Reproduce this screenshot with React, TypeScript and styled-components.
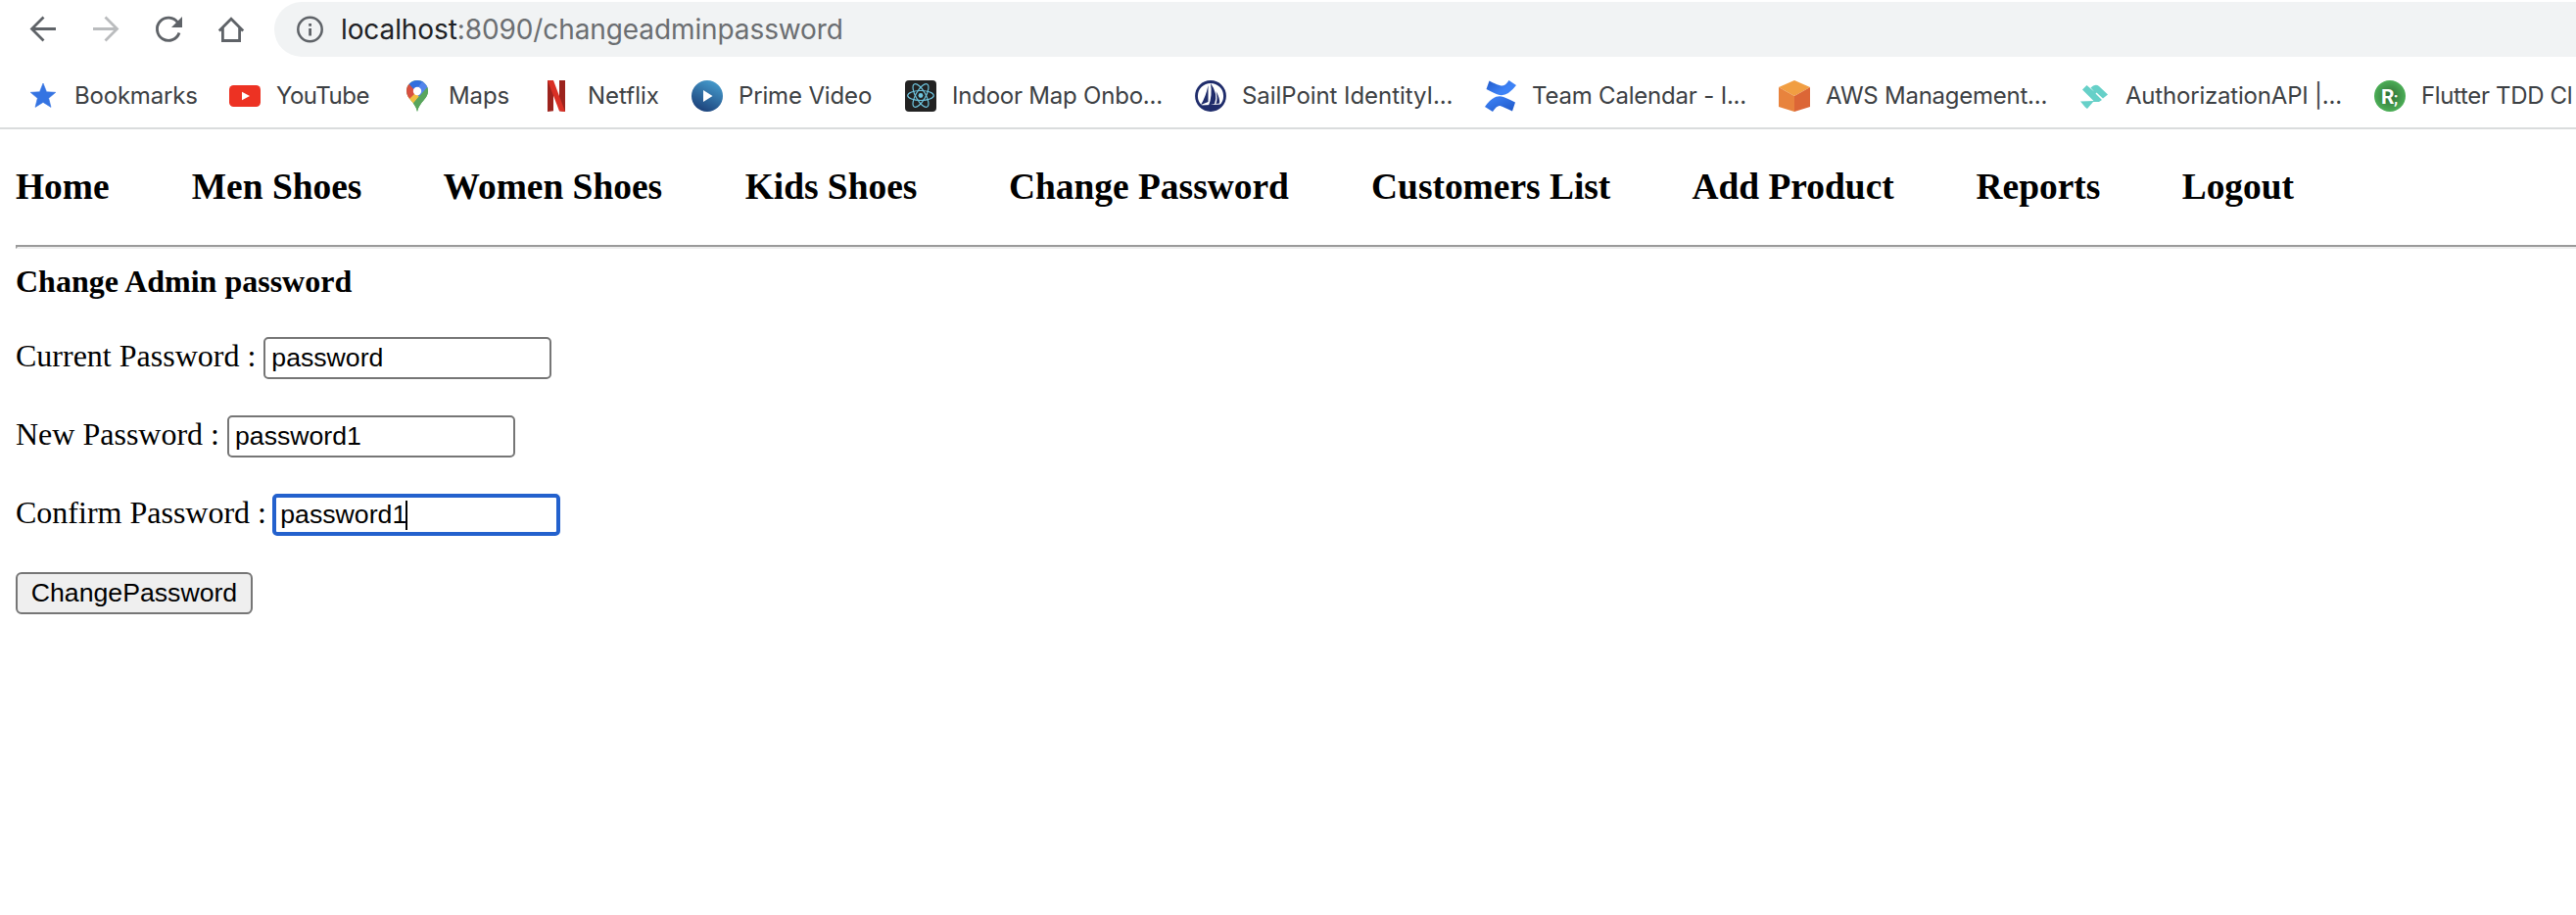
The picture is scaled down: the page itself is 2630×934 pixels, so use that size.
import React from "react";
import styled, { createGlobalStyle } from "styled-components";

const GlobalStyle = createGlobalStyle`
  html, body { margin: 0; background: #fff; overflow: hidden; }
  * { box-sizing: border-box; }
`;

const Window = styled.div`
  width: 100%;
  height: 934px;
  overflow: hidden;
  background: #fff;
`;

const Toolbar = styled.div`
  display: flex;
  align-items: center;
  height: 60px;
  padding-left: 24px;
`;

const ToolButton = styled.span<{ $dim?: boolean }>`
  flex: none;
  display: flex;
  align-items: center;
  justify-content: center;
  width: 40px;
  height: 40px;
  margin-right: 24px;
  color: ${(p) => (p.$dim ? "#babcbe" : "#5f6368")};
`;

const AddressBar = styled.div`
  flex: 1;
  display: flex;
  align-items: center;
  height: 56px;
  padding-left: 22px;
  border-radius: 28px 0 0 28px;
  background: #f1f3f4;
  color: #5f6368;
`;

const Url = styled.span`
  margin-left: 16px;
  font: 400 28px/56px Inter, sans-serif;
  letter-spacing: -0.1px;
  color: #6b6e71;
  white-space: nowrap;
`;

const Host = styled.span`
  color: #202124;
`;

const BookmarkBar = styled.div`
  display: flex;
  align-items: center;
  height: 72px;
  padding: 6px 0 0 28px;
  border-bottom: 2px solid #dadcdd;
`;

const Bookmark = styled.div<{ $width: number }>`
  flex: none;
  display: flex;
  align-items: center;
  gap: 16px;
  width: ${(p) => p.$width}px;
  height: 32px;
`;

const BookmarkLabel = styled.span<{ $spacing: number }>`
  font: 400 24px/32px Inter, sans-serif;
  letter-spacing: ${(p) => p.$spacing}px;
  color: #3c4043;
  white-space: nowrap;
`;

const Icon = styled.svg`
  flex: none;
  display: block;
`;

const Page = styled.main`
  padding: 0 0 0 16px;
  font-family: "Liberation Serif", serif;
  color: #000;
`;

const Nav = styled.nav`
  display: flex;
  padding-top: 37px;
  font-size: 37.44px;
  font-weight: 700;
  line-height: 43px;
  white-space: nowrap;
`;

const NavLink = styled.span<{ $gap: number }>`
  margin-right: ${(p) => p.$gap}px;
`;

const Rule = styled.div`
  height: 4px;
  margin-top: 38px;
  border: 2px solid;
  border-right: 0;
  border-color: #9a9a9a #eee #eee #9a9a9a;
`;

const Title = styled.h1`
  margin: 14px 0 0;
  padding-bottom: 1px;
  font-size: 32px;
  line-height: 38px;
  font-weight: 700;
`;

const Row = styled.div<{ $gap?: number }>`
  display: flex;
  align-items: center;
  gap: ${(p) => p.$gap ?? 8}px;
  height: 43px;
  margin-top: 37px;
  font-size: 32px;
  line-height: 37px;
`;

const Label = styled.label`
  padding-bottom: 5px;
  white-space: nowrap;
`;

const Field = styled.div<{ $focused?: boolean }>`
  display: flex;
  align-items: center;
  width: 294px;
  height: 43px;
  padding-left: ${(p) => (p.$focused ? 4 : 6)}px;
  border: ${(p) => (p.$focused ? "4px solid #2361cd" : "2px solid #767676")};
  border-radius: 5px;
  background: #fff;
  font: 26.67px/31px "Liberation Sans", Arial, sans-serif;
`;

const Caret = styled.span`
  width: 2px;
  height: 30px;
  margin-left: -1px;
  background: #000;
`;

const Submit = styled.button`
  width: 242px;
  height: 43px;
  padding: 0 0 1px;
  border: 2px solid #767676;
  border-radius: 6px;
  background: #efefef;
  color: #000;
  font: 26.67px/31px "Liberation Sans", Arial, sans-serif;
`;

const BackIcon = () => (
  <Icon width="40" height="40" viewBox="0 0 40 40" fill="none" stroke="currentColor" strokeWidth="2.8">
    <path d="M33 19.500H9M20.500 7.500L8.500 19.500L20.500 31.500" />
  </Icon>
);
const ForwardIcon = () => (
  <Icon width="40" height="40" viewBox="0 0 40 40" fill="none" stroke="currentColor" strokeWidth="2.8">
    <path d="M7 19.500H31M19.500 7.500L31.500 19.500L19.500 31.500" />
  </Icon>
);
const ReloadIcon = () => (
  <Icon width="40" height="40" viewBox="0 0 40 40">
    <path d="M29.5 13A11.6 11.6 0 1 0 31 23.5" fill="none" stroke="currentColor" strokeWidth="2.9" />
    <path d="M34 7V18H23Z" fill="currentColor" />
  </Icon>
);
const HomeIcon = () => (
  <Icon width="40" height="40" viewBox="0 0 40 40" fill="none" stroke="currentColor" strokeWidth="2.8">
    <path d="M7.8 21.5L20 9.3L32.2 21.5M11.4 18.5V31.500H28.6V18.5" />
  </Icon>
);
const InfoIcon = () => (
  <Icon width="30" height="30" viewBox="0 0 30 30">
    <circle cx="14.5" cy="15" r="12.2" fill="none" stroke="currentColor" strokeWidth="2.5" />
    <path d="M13.2 9h2.8v2.7h-2.8zM13.2 14h2.8v7.5h-2.8z" fill="currentColor" />
  </Icon>
);

const Star = () => (
  <path
    d="M16 3L19.5 11.7L28.8 12.3L21.7 18.3L24 27.4L16 22.4L8 27.4L10.3 18.3L3.2 12.3L12.5 11.7Z"
    fill="#3574e2"
    stroke="#3574e2"
    strokeWidth="0.6"
  />
);
const YouTube = () => (
  <>
    <rect x="0" y="5" width="32" height="22" rx="4.5" fill="#ed3223" />
    <path d="M13 11.8L21 16L13 20.2Z" fill="#fff" />
  </>
);
const Maps = () => (
  <>
    <clipPath id="pin">
      <path d="M16 0C22 0 27 4.7 27 11C27 19 18 22 16 32C14 22 5 19 5 11C5 4.7 10 0 16 0Z" />
    </clipPath>
    <g clipPath="url(#pin)">
      <path d="M0 0H32V32H0Z" fill="#58a55c" />
      <path d="M2 20L12 8L20 14L9 27Z" fill="#f1bf42" />
      <path d="M2 3L8 3.5L16 11L7 20L2 16Z" fill="#d85040" />
      <path d="M7 3L15 -1H24L14 11Z" fill="#2f6fde" />
      <path d="M22 0L30 5L18 17L14 11Z" fill="#5385ec" />
      <path d="M27 6L8 28L16 34L30 20V6Z" fill="#58a55c" />
    </g>
    <circle cx="16" cy="11" r="4.2" fill="#fff" />
  </>
);
const Netflix = () => (
  <>
    <path d="M7 0H13V31.3L7 32ZM19 0H25V32L19 31.3Z" fill="#9c231d" />
    <path d="M7 0H13L25 32L19 31.3Z" fill="#d93025" />
  </>
);
const Prime = () => (
  <>
    <linearGradient id="prime" x1="0.8" y1="0" x2="0.3" y2="1">
      <stop offset="0" stopColor="#479fd0" />
      <stop offset="1" stopColor="#1b4079" />
    </linearGradient>
    <circle cx="16" cy="16" r="16" fill="url(#prime)" />
    <path d="M12 10L21.5 16L12 22Z" fill="#fff" />
  </>
);
const ReactLogo = () => (
  <>
    <rect width="32" height="32" rx="4" fill="#222" />
    <g fill="none" stroke="#6fc6e0" strokeWidth="1.2">
      <ellipse cx="16" cy="15.500" rx="13.3" ry="5" />
      <ellipse cx="16" cy="15.500" rx="13.3" ry="5" transform="rotate(60 16 15.5)" />
      <ellipse cx="16" cy="15.500" rx="13.3" ry="5" transform="rotate(120 16 15.5)" />
    </g>
    <circle cx="16" cy="15.500" r="2.4" fill="#6fc6e0" />
  </>
);
const SailPoint = () => (
  <>
    <circle cx="16" cy="16" r="14.5" fill="#fff" stroke="#1f2c6b" strokeWidth="2.8" />
    <path
      d="M13.500 5V22L6 25Q11 17 13.500 5ZM16 3Q24 14 20 24L14 25.500Q18 16 16 3ZM21.500 11Q26 19 25 23.500L21.500 24Q23.500 18 21.500 11ZM6 25.500L27 24.500Q22 30 16 30Q10 30 6 25.500Z"
      fill="#1f2c6b"
    />
  </>
);
const Confluence = () => (
  <>
    <linearGradient id="cfTop" x1="0" y1="0" x2="1" y2="0.7">
      <stop offset="0" stopColor="#2059c9" />
      <stop offset="0.7" stopColor="#3d82f6" />
    </linearGradient>
    <linearGradient id="cfBottom" x1="0.2" y1="0" x2="1" y2="0.9">
      <stop offset="0" stopColor="#3d82f6" />
      <stop offset="1" stopColor="#2059c9" />
    </linearGradient>
    <path d="M4.500 0.500L1.500 9Q9 13 14 14.800Q23 17 32 5L24.500 0Q21 6 16.500 5.500Q11 4 4.500 0.500Z" fill="url(#cfTop)" />
    <path d="M0 27Q8 15 17 16.500Q20 17 31 22.500L28 31.500Q19 27 15.500 26Q12 25.500 8 32Z" fill="url(#cfBottom)" />
  </>
);
const AwsCube = () => (
  <>
    <path d="M16 0L32 7L16 16L0 7Z" fill="#f19e42" />
    <path d="M0 7L16 16V32L0 27Z" fill="#e8833d" />
    <path d="M32 7L16 16V32L32 27Z" fill="#dc6636" />
  </>
);
const Swimlane = () => (
  <path
    d="M4 9.500L8.500 5L16 11.500L12.500 7.500Q17 3 21 6L30 14.500L25 18.500L18.500 12.500L17.500 13.500L24 20L21 22L15 22L9 29L7 27.500L2 21.500L15.500 21Z"
    fill="#66d0c8"
  />
);
const Reso = () => (
  <>
    <radialGradient id="reso">
      <stop offset="0" stopColor="#2f6b35" />
      <stop offset="1" stopColor="#4caf57" />
    </radialGradient>
    <circle cx="16" cy="16" r="16" fill="url(#reso)" />
    <text x="7" y="24" fill="#fff" fontFamily="Roboto, sans-serif" fontWeight="700" fontSize="21">R</text>
    <text x="20" y="24" fill="#fff" fontFamily="Roboto, sans-serif" fontWeight="700" fontSize="16">;</text>
  </>
);

const bookmarks = [
  { label: "Bookmarks", icon: Star, width: 206, spacing: -0.2 },
  { label: "YouTube", icon: YouTube, width: 176, spacing: -0.5 },
  { label: "Maps", icon: Maps, width: 142, spacing: -0.1 },
  { label: "Netflix", icon: Netflix, width: 154, spacing: 0 },
  { label: "Prime Video", icon: Prime, width: 218, spacing: -0.15 },
  { label: "Indoor Map Onbo...", icon: ReactLogo, width: 296, spacing: -0.22 },
  { label: "SailPoint IdentityI...", icon: SailPoint, width: 296, spacing: -0.06 },
  { label: "Team Calendar - I...", icon: Confluence, width: 300, spacing: -0.2 },
  { label: "AWS Management...", icon: AwsCube, width: 306, spacing: -0.25 },
  { label: "AuthorizationAPI |...", icon: Swimlane, width: 302, spacing: -0.2 },
  { label: "Flutter TDD Cl", icon: Reso, width: 206, spacing: -0.35 },
];

const links = [
  { text: "Home", gap: 84.2 },
  { text: "Men Shoes", gap: 83.2 },
  { text: "Women Shoes", gap: 84.5 },
  { text: "Kids Shoes", gap: 93.6 },
  { text: "Change Password", gap: 84.2 },
  { text: "Customers List", gap: 83.2 },
  { text: "Add Product", gap: 83.8 },
  { text: "Reports", gap: 83.4 },
  { text: "Logout", gap: 0 },
];

export default function App() {
  return (
    <Window>
      <GlobalStyle />
      <Toolbar>
        <ToolButton><BackIcon /></ToolButton>
        <ToolButton $dim><ForwardIcon /></ToolButton>
        <ToolButton><ReloadIcon /></ToolButton>
        <ToolButton><HomeIcon /></ToolButton>
        <AddressBar>
          <InfoIcon />
          <Url><Host>localhost</Host>:8090/changeadminpassword</Url>
        </AddressBar>
      </Toolbar>
      <BookmarkBar>
        {bookmarks.map(({ label, icon: Glyph, width, spacing }) => (
          <Bookmark key={label} $width={width}>
            <Icon width="32" height="32" viewBox="0 0 32 32"><Glyph /></Icon>
            <BookmarkLabel $spacing={spacing}>{label}</BookmarkLabel>
          </Bookmark>
        ))}
      </BookmarkBar>
      <Page>
        <Nav>
          {links.map(({ text, gap }) => <NavLink key={text} $gap={gap}>{text}</NavLink>)}
        </Nav>
        <Rule />
        <Title>Change Admin password</Title>
        <Row><Label>Current Password :</Label><Field>password</Field></Row>
        <Row><Label>New Password :</Label><Field>password1</Field></Row>
        <Row $gap={6.3}><Label>Confirm Password :</Label><Field $focused>password1<Caret /></Field></Row>
        <Row><Submit>ChangePassword</Submit></Row>
      </Page>
    </Window>
  );
}
